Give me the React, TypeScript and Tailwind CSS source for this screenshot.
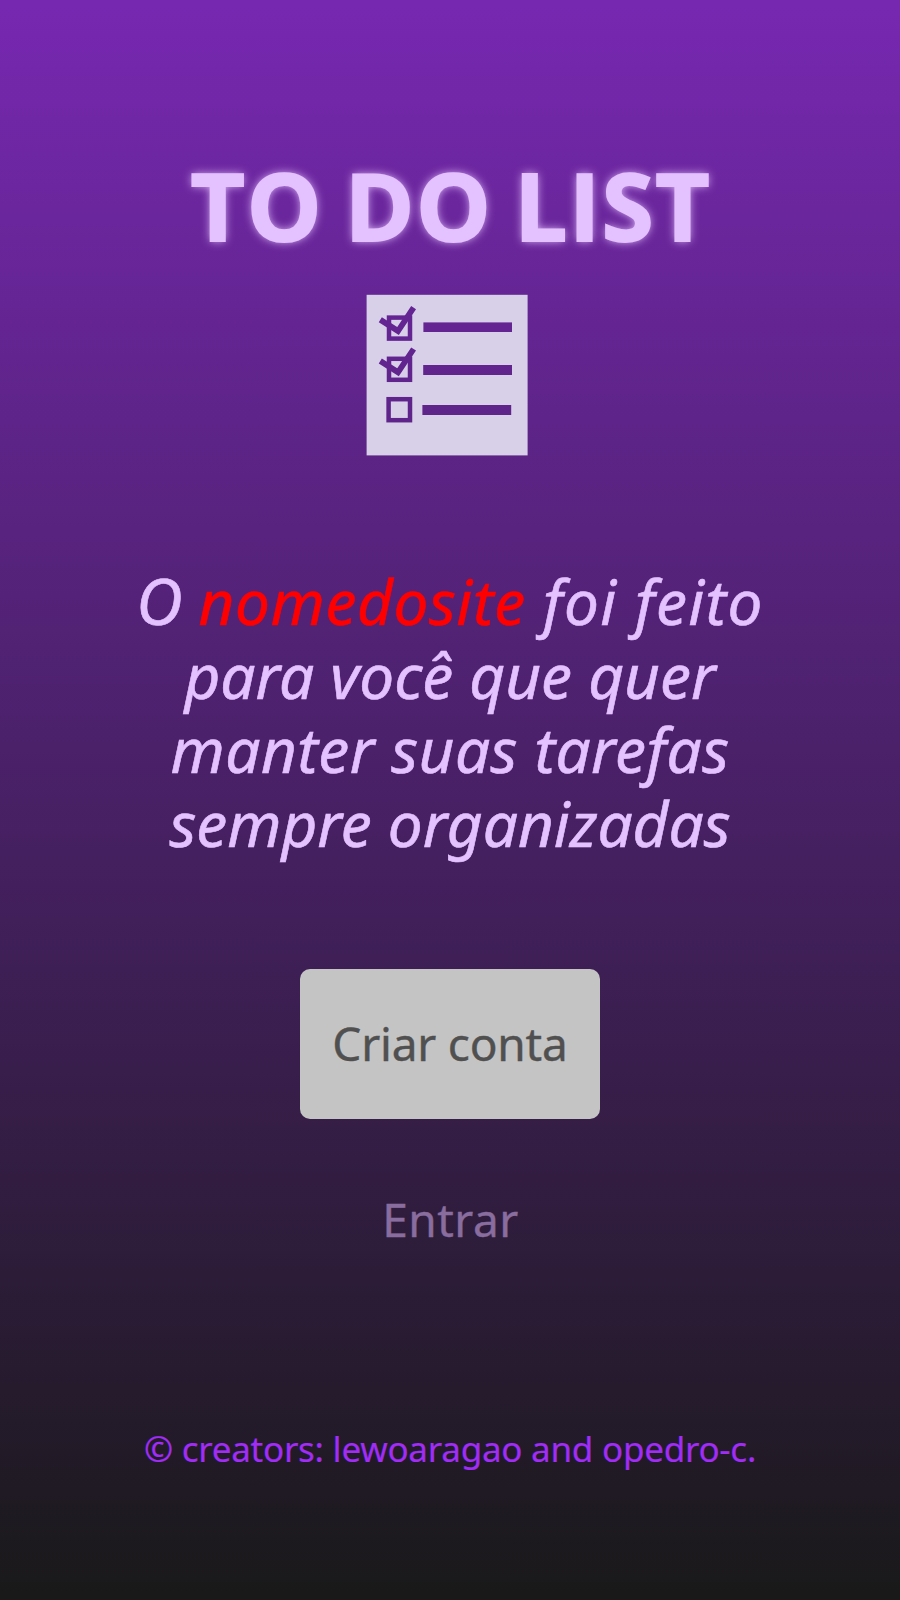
function ChecklistIcon() {
  return (
    <svg width="162" height="162" viewBox="366 294 162 162" className="mt-[294px] ml-[366px] shrink-0" aria-hidden="true">
      <mask id="cutout" maskUnits="userSpaceOnUse" x="366" y="294" width="162" height="162">
        <rect x="366.6" y="294.8" width="161" height="160.6" fill="white" />
        <g fill="none" stroke="black" strokeWidth="4.5">
          <rect x="389" y="317.6" width="21" height="21" />
          <rect x="389" y="358.8" width="21" height="21" />
          <rect x="388.6" y="399.2" width="21.4" height="21" />
        </g>
        <g fill="none" stroke="black" strokeWidth="5.8">
          <path d="M380.3 319.7 398 331 413.6 307.7" />
          <path d="M380.3 361 398 372.3 413.6 349" />
        </g>
        <rect x="423.4" y="322.4" width="88.6" height="9.6" fill="black" />
        <rect x="423.2" y="365" width="88.8" height="10" fill="black" />
        <rect x="422.4" y="405" width="88.8" height="10" fill="black" />
      </mask>
      <rect x="366" y="294" width="162" height="162" fill="#d8d0e8" mask="url(#cutout)" />
    </svg>
  );
}

export default function App() {
  return (
    <main className="grid h-[1600px] w-[900px] grid-cols-1 grid-rows-1 overflow-hidden bg-[linear-gradient(180deg,#7728b1_0%,#191919_100%)] font-['Noto_Sans',sans-serif] whitespace-nowrap">
      <h1 className="col-start-1 row-start-1 pt-[155px] pl-[2px] text-center font-['Open_Sans',sans-serif] text-[94px] leading-[100px] font-bold tracking-[1.7px] text-[#e4c1ff] [-webkit-text-stroke:1.8px_#e4c1ff] [text-shadow:0_0_10px_#e4c1ff] [word-spacing:-4.5px]">
        TO DO LIST
      </h1>
      <div className="col-start-1 row-start-1">
        <ChecklistIcon />
      </div>
      <p className="col-start-1 row-start-1 flex flex-col items-center pt-[564px] text-[62px] leading-[74px] text-[#e4c1ff] italic [-webkit-text-stroke:0.6px]">
        <span>
          <span className="text-[64px]">O</span> <span className="tracking-[0.6px] text-[#ff0000]">nomedosite</span>
          <span className="tracking-[1.3px]"> foi feito</span>
        </span>
        <span>para você que quer</span>
        <span className="tracking-[0.45px]">manter suas tarefas</span>
        <span>sempre organizadas</span>
      </p>
      <div className="col-start-1 row-start-1 flex flex-col items-center pt-[969px]">
        <button className="h-[150px] w-[300px] rounded-[10px] bg-[#c4c4c4] pb-[2px] text-[46px] tracking-[-0.2px] text-[#505050] [-webkit-text-stroke:0.4px]">Criar conta</button>
        <a className="mt-[70px] pl-[1px] text-[46px] leading-[60px] tracking-[0.5px] text-[#896d9e] [-webkit-text-stroke:0.4px]">Entrar</a>
        <footer className="mt-[175px] text-[35px] leading-[50px] tracking-[-0.25px] text-[#a02cf5] [-webkit-text-stroke:0.2px]">© creators: lewoaragao and opedro-c.</footer>
      </div>
    </main>
  );
}
